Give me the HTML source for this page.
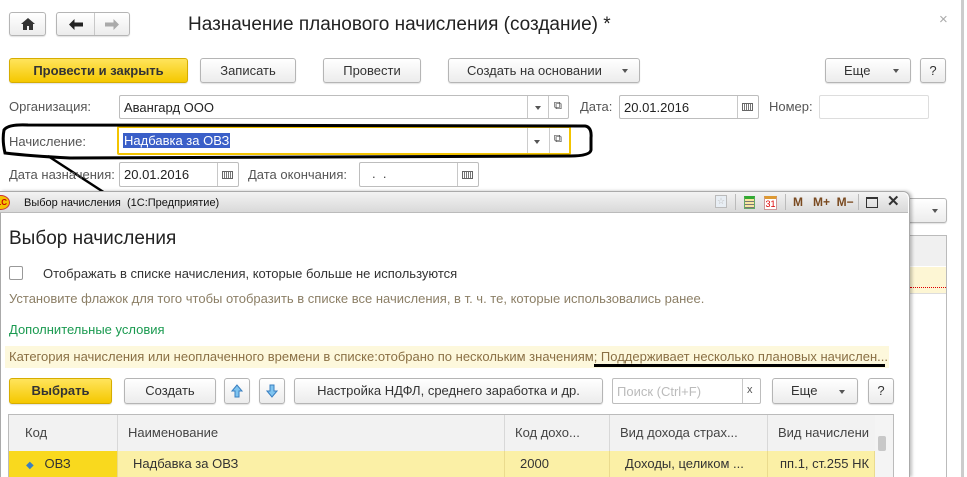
<!DOCTYPE html>
<html><head><meta charset="utf-8"><style>
*{box-sizing:border-box;margin:0;padding:0}
html,body{width:967px;height:477px;overflow:hidden}
body{background:#fff;font-family:"Liberation Sans",Arial,sans-serif;font-size:13px;color:#333;position:relative}
.a{position:absolute}
.btn{position:absolute;border:1px solid #b5b5b5;border-radius:3px;background:linear-gradient(#fff,#ececec);text-align:center;color:#333;box-shadow:0 1px 1px rgba(0,0,0,.12)}
.y{background:linear-gradient(#ffe45c,#f5c800);border-color:#d6ad00;font-weight:bold}
.inp{position:absolute;border:1px solid #bdbdbd;border-radius:2px;background:#fff}
.lab{position:absolute;color:#555}
.sep{position:absolute;top:0;bottom:0;border-left:1px solid #c8c8c8}
.cal{position:absolute;width:11px;height:8px;border:1px solid #666;background:repeating-linear-gradient(90deg,#fff 0 1px,#777 1px 2px)}
.dd{position:absolute;width:0;height:0;border-left:3px solid transparent;border-right:3px solid transparent;border-top:4px solid #555}
.th{position:absolute;top:415px;height:36px;line-height:36px;border-right:1px solid #d8d8d8;padding-left:10px;color:#444;background:#f2f2f2}
.td{position:absolute;top:451px;height:26px;line-height:26px;padding-left:15px;color:#333;border-right:1px solid #eadb8e;background:#fbf0a6}
</style></head><body>
<div class="btn" style="left:9px;top:12px;width:37px;height:24px"><svg width="14" height="12" viewBox="0 0 14 12" style="margin-top:5px"><path d="M7 0L0 6h2v6h4V8h2v4h4V6h2z" fill="#333"/></svg></div>
<div class="btn" style="left:56px;top:12px;width:74px;height:24px"><svg class="a" style="left:12px;top:6px" width="14" height="11" viewBox="0 0 14 11"><path d="M0 5.5L5.5 0v3.5H14v4H5.5V11z" fill="#222"/></svg><div class="sep" style="left:37px"></div><svg class="a" style="left:48px;top:6px" width="14" height="11" viewBox="0 0 14 11"><path d="M14 5.5L8.5 0v3.5H0v4h8.5V11z" fill="#aaa"/></svg></div>
<div class="a" style="left:188px;top:14px;font-size:19px;color:#222">Назначение планового начисления (создание) *</div>
<div class="a" style="left:939px;top:11px;font-size:15px;color:#aaa">×</div>
<div class="btn y" style="left:9px;top:58px;width:179px;height:25px;line-height:23px">Провести и закрыть</div>
<div class="btn" style="left:200px;top:58px;width:96px;height:25px;line-height:23px">Записать</div>
<div class="btn" style="left:323px;top:58px;width:98px;height:25px;line-height:23px">Провести</div>
<div class="btn" style="left:448px;top:58px;width:192px;height:25px;line-height:23px;text-align:left;padding-left:18px">Создать на основании<div class="dd" style="left:173px;top:10px"></div></div>
<div class="btn" style="left:825px;top:58px;width:86px;height:25px;line-height:23px;text-align:left;padding-left:18px">Еще<div class="dd" style="left:67px;top:10px"></div></div>
<div class="btn" style="left:920px;top:58px;width:26px;height:25px;line-height:23px">?</div>
<div class="lab" style="left:9px;top:99px">Организация:</div>
<div class="inp" style="left:119px;top:95px;width:450px;height:24px"><span class="a" style="left:4px;top:4px;color:#222">Авангард ООО</span><div class="sep" style="left:407px"></div><div class="dd" style="left:415px;top:10px"></div><div class="sep" style="left:428px"></div><span class="a" style="left:434px;top:4px;font-size:11px">⧉</span></div>
<div class="lab" style="left:580px;top:99px">Дата:</div>
<div class="inp" style="left:619px;top:95px;width:140px;height:24px"><span class="a" style="left:4px;top:4px;color:#222">20.01.2016</span><div class="sep" style="left:117px"></div><div class="cal" style="left:122px;top:7px"></div></div>
<div class="lab" style="left:769px;top:99px">Номер:</div>
<div class="inp" style="left:819px;top:95px;width:110px;height:24px;border-color:#ddd"></div>
<div class="lab" style="left:9px;top:134px">Начисление:</div>
<div class="inp" style="left:117px;top:126px;width:454px;height:29px;border:2px solid #f3c400"><span class="a" style="left:4px;top:5px;background:#3a5fc8;color:#fff;padding:0 1px">Надбавка за ОВЗ</span><div class="sep" style="left:408px;border-color:#ccc"></div><div class="dd" style="left:415px;top:12px"></div><div class="sep" style="left:430px;border-color:#ccc"></div><span class="a" style="left:435px;top:5px;font-size:11px">⧉</span></div>
<svg class="a" style="left:0;top:118px" width="600" height="80"><path d="M28 7 L585 8 Q592 9 591 20 L591 32 Q590 38 570 38 L70 40 Q30 38 5 35 Q2 22 4 12 Q8 6 28 7Z" fill="none" stroke="#000" stroke-width="3"/><path d="M48 38 L105 75" stroke="#000" stroke-width="2.5"/></svg>
<div class="lab" style="left:9px;top:167px">Дата назначения:</div>
<div class="inp" style="left:119px;top:162px;width:120px;height:25px"><span class="a" style="left:4px;top:4px;color:#222">20.01.2016</span><div class="sep" style="left:97px"></div><div class="cal" style="left:102px;top:8px"></div></div>
<div class="lab" style="left:248px;top:167px">Дата окончания:</div>
<div class="inp" style="left:359px;top:162px;width:120px;height:25px"><span class="a" style="left:12px;top:3px;color:#444">.&nbsp;&nbsp;.</span><div class="sep" style="left:97px"></div><div class="cal" style="left:102px;top:8px"></div></div>
<div class="btn" style="left:900px;top:198px;width:47px;height:25px"><div class="dd" style="left:31px;top:10px"></div></div>
<div class="a" style="left:905px;top:235px;width:42px;height:242px;border:1px solid #bbb;border-bottom:none;background:#fff"></div>
<div class="a" style="left:906px;top:236px;width:40px;height:30px;background:#f0f0f0"></div>
<div class="a" style="left:906px;top:267px;width:40px;height:27px;background:#fdf6d4;border-bottom:1px solid #ddd"></div>
<div class="a" style="left:910px;top:287px;width:36px;border-top:1px dotted #d00"></div>
<div class="a" style="left:961px;top:0;width:3px;height:477px;background:#ccc"></div>
<div class="a" style="left:0;top:191px;width:910px;height:286px;background:#fff;border:1px solid #aaa;border-bottom:none;border-radius:0 7px 0 0;box-shadow:2px 0 3px rgba(0,0,0,.25)"></div>
<div class="a" style="left:0;top:192px;width:908px;height:21px;background:linear-gradient(#f3f3f3,#d9d9d9);border-radius:0 7px 0 0;border-bottom:1px solid #bbb"></div>
<div class="a" style="left:-8px;top:195px;width:18px;height:15px;border-radius:50%;background:#f4c200;border:1px solid #c33;color:#c00;font-size:8px;font-weight:bold;line-height:13px;text-align:right;padding-right:2px">1С</div>
<div class="a" style="left:24px;top:197px;font-size:11px;color:#111">Выбор начисления&nbsp; (1С:Предприятие)</div>
<div class="a" style="left:715px;top:195px;width:12px;height:13px;border:1px solid #bbb;background:#e8eef4;color:#bbb;font-size:9px;text-align:center">☆</div>
<div class="a" style="left:735px;top:194px;height:16px;border-left:1px solid #bbb"></div>
<div class="a" style="left:744px;top:196px;width:11px;height:13px;border:1px solid #6a6;background:repeating-linear-gradient(#f6e7a0 0 2px,#777 2px 3px);border-top:3px solid #3a3"></div>
<div class="a" style="left:764px;top:196px;width:13px;height:14px;border:1px solid #c99;background:#fff;border-top:3px solid #d93;color:#d00;font-size:9px;text-align:center;line-height:10px">31</div>
<div class="a" style="left:785px;top:194px;height:16px;border-left:1px solid #bbb"></div>
<div class="a" style="left:793px;top:195px;font-size:12px;font-weight:bold;color:#7a4a20">M&nbsp;&nbsp;&nbsp;M+&nbsp;&nbsp;M−</div>
<div class="a" style="left:858px;top:194px;height:16px;border-left:1px solid #bbb"></div>
<div class="a" style="left:866px;top:197px;width:12px;height:11px;border:1px solid #333;border-top-width:2px"></div>
<div class="a" style="left:887px;top:192px;font-size:15px;font-weight:bold;color:#333">✕</div>
<div class="a" style="left:9px;top:228px;font-size:19px;color:#222">Выбор начисления</div>
<div class="a" style="left:9px;top:266px;width:14px;height:14px;border:1px solid #999;border-radius:2px"></div>
<div class="a" style="left:43px;top:266px;color:#333">Отображать в списке начисления, которые больше не используются</div>
<div class="a" style="left:9px;top:291px;font-size:13px;color:#8c7f66">Установите флажок для того чтобы отобразить в списке все начисления, в т. ч. те, которые использовались ранее.</div>
<div class="a" style="left:9px;top:322px;font-size:13px;color:#1a9a50">Дополнительные условия</div>
<div class="a" style="left:5px;top:346px;width:884px;height:22px;background:#fdf8dc"></div>
<div class="a" style="left:9px;top:349px;font-size:13px;color:#8a7045;white-space:nowrap;width:878px;overflow:hidden">Категория начисления или неоплаченного времени в списке:отобрано по нескольким значениям; Поддерживает несколько плановых начислен...</div>
<div class="a" style="left:594px;top:364px;width:291px;height:3px;background:#000"></div>
<div class="btn y" style="left:9px;top:378px;width:103px;height:26px;line-height:24px">Выбрать</div>
<div class="btn" style="left:124px;top:378px;width:92px;height:26px;line-height:24px">Создать</div>
<div class="btn" style="left:224px;top:378px;width:26px;height:26px"><svg width="12" height="14" viewBox="0 0 12 14" style="margin-top:5px"><path d="M6 1L1 7h3v6h4V7h3z" fill="#7fc4f0" stroke="#3a7fc0"/></svg></div>
<div class="btn" style="left:259px;top:378px;width:26px;height:26px"><svg width="12" height="14" viewBox="0 0 12 14" style="margin-top:5px"><path d="M6 13L1 7h3V1h4v6h3z" fill="#7fc4f0" stroke="#3a7fc0"/></svg></div>
<div class="btn" style="left:294px;top:378px;width:309px;height:26px;line-height:24px">Настройка НДФЛ, среднего заработка и др.</div>
<div class="inp" style="left:612px;top:378px;width:149px;height:26px"><span class="a" style="left:4px;top:5px;color:#bbb">Поиск (Ctrl+F)</span><div class="sep" style="left:129px"></div><span class="a" style="left:134px;top:5px;font-size:11px;color:#555">x</span></div>
<div class="btn" style="left:772px;top:378px;width:86px;height:26px;line-height:24px;text-align:left;padding-left:18px">Еще<div class="dd" style="left:66px;top:11px"></div></div>
<div class="btn" style="left:868px;top:378px;width:26px;height:26px;line-height:24px">?</div>
<div class="a" style="left:8px;top:414px;width:886px;height:63px;border:1px solid #bbb;border-bottom:none"></div>
<div class="th" style="left:9px;width:109px;padding-left:16px">Код</div>
<div class="th" style="left:118px;width:387px">Наименование</div>
<div class="th" style="left:505px;width:105px">Код дохо...</div>
<div class="th" style="left:610px;width:158px">Вид дохода страх...</div>
<div class="th" style="left:768px;width:107px;border-right:none">Вид начислени</div>
<div class="a" style="left:875px;top:415px;width:18px;height:62px;background:#f4f4f4"></div>
<div class="a" style="left:878px;top:436px;width:8px;height:15px;background:#c8c8c8;border-radius:2px"></div>
<div class="td" style="left:9px;width:109px;background:#f9d91e;padding-left:17px"><span style="color:#3a7fc0;font-size:10px">◆</span>&nbsp;&nbsp; ОВЗ</div>
<div class="td" style="left:118px;width:387px">Надбавка за ОВЗ</div>
<div class="td" style="left:505px;width:105px">2000</div>
<div class="td" style="left:610px;width:158px">Доходы, целиком ...</div>
<div class="td" style="left:768px;width:107px;padding-left:12px;overflow:hidden;white-space:nowrap">пп.1, ст.255 НК</div>
</body></html>
